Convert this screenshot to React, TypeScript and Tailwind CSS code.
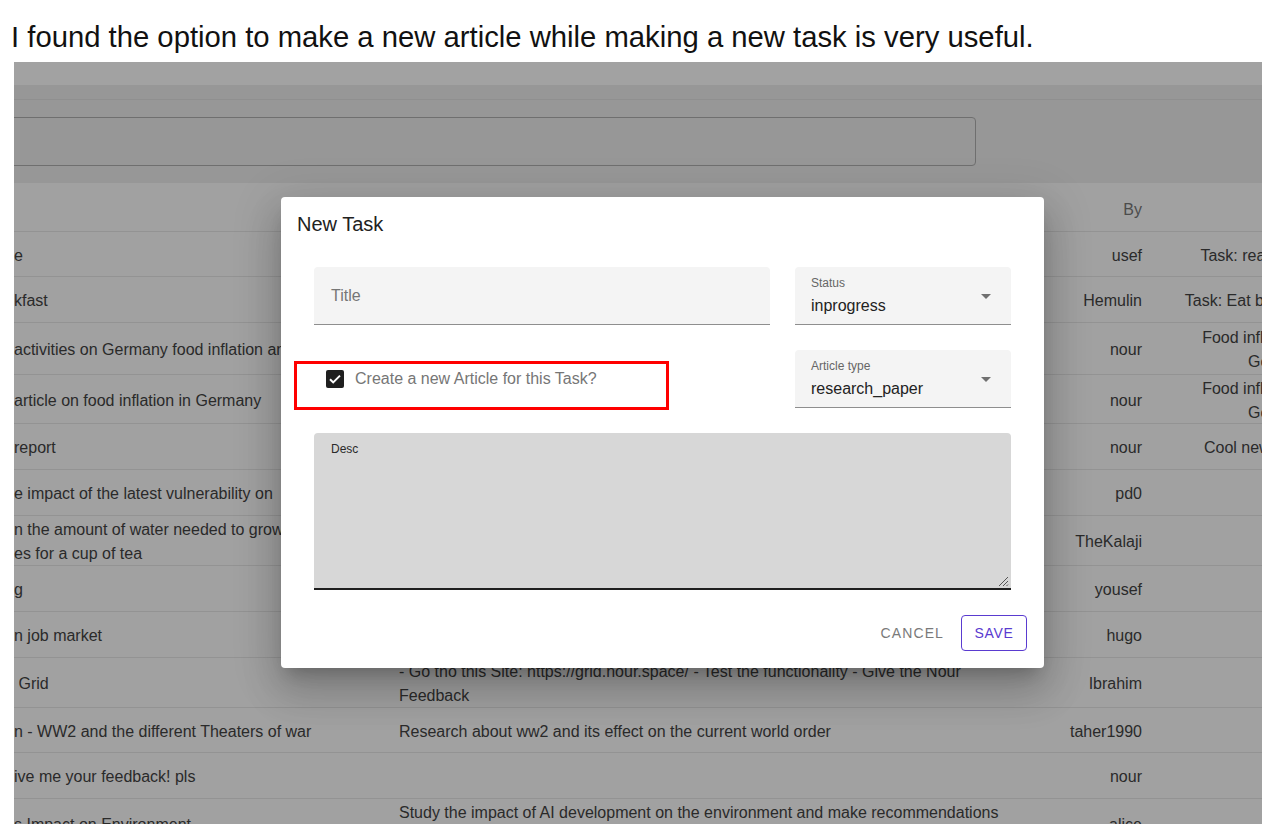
import React from "react";

type Row = { h: number; c1: string[]; c2?: string[]; by: string; c4?: string[] };

const rows: Row[] = [
  { h: 45, c1: ["e"], by: "usef", c4: ["Task: read the newspaper"] },
  { h: 46, c1: ["kfast"], by: "Hemulin", c4: ["Task: Eat breakfast every day!"] },
  { h: 52, c1: ["activities on Germany food inflation and"], by: "nour", c4: ["Food inflation research in", "Germany 22"] },
  { h: 49, c1: ["article on food inflation in Germany"], by: "nour", c4: ["Food inflation research in", "Germany 22"] },
  { h: 46, c1: ["report"], by: "nour", c4: ["Cool new report about AI"] },
  { h: 46, c1: ["e impact of the latest vulnerability on"], by: "pd0" },
  { h: 50, c1: ["n the amount of water needed to grow", "es for a cup of tea"], by: "TheKalaji" },
  { h: 46, c1: ["g"], by: "yousef" },
  { h: 46, c1: ["n job market"], by: "hugo" },
  {
    h: 50,
    c1: [" Grid"],
    c2: ["- Go tho this Site: https://grid.nour.space/ - Test the functionality - Give the Nour", "Feedback"],
    by: "Ibrahim",
  },
  {
    h: 45,
    c1: ["n - WW2 and the different Theaters of war"],
    c2: ["Research about ww2 and its effect on the current world order"],
    by: "taher1990",
  },
  { h: 46, c1: ["ive me your feedback! pls"], by: "nour" },
  {
    h: 50,
    c1: ["s Impact on Environment"],
    c2: ["Study the impact of AI development on the environment and make recommendations", "to reduce its footprint"],
    by: "alice",
  },
];

function Lines({ lines }: { lines?: string[] }) {
  if (!lines) return null;
  return (
    <>
      {lines.map((l, i) => (
        <div key={i} className="leading-[24px] whitespace-pre">
          {l}
        </div>
      ))}
    </>
  );
}

function Arrow() {
  return (
    <svg width="24" height="24" viewBox="0 0 24 24" className="absolute right-[13px] top-[17px]">
      <path d="M7 10l5 5 5-5z" fill="rgba(0,0,0,0.54)" />
    </svg>
  );
}

function SelectField({ label, value }: { label: string; value: string }) {
  return (
    <div className="relative h-[58px] bg-[#f4f4f4] rounded-t-[4px] border-b border-[#8e8e8e] pl-[16px]">
      <div className="pt-[9px] text-[12px] leading-[14px] text-[#666666]">{label}</div>
      <div className="mt-[4px] text-[16px] leading-[24px] text-[#222222]">{value}</div>
      <Arrow />
    </div>
  );
}

export default function App() {
  return (
    <div
      className="relative w-[1262px] h-[824px] overflow-hidden bg-white"
      style={{ fontFamily: "'Liberation Sans', Arial, sans-serif" }}
    >
      {/* caption */}
      <div className="h-[62px] pl-[11px] pt-[20px] text-[29.25px] leading-[34px] text-[#111111] whitespace-nowrap">
        I found the option to make a new article while making a new task is very useful.
      </div>

      {/* dimmed app screenshot */}
      <div className="ml-[14px] flex flex-col overflow-hidden">
        <div className="h-[23px] bg-[#a2a2a2]" />
        <div className="bg-[#979797]">
          <div className="h-[15px] border-b border-[#8f8f8f]" />
          <div className="pt-[17px] pb-[17px]">
            <div className="-ml-[10px] w-[972px] h-[49px] rounded-[4px] border border-[#6f6f6f]" />
          </div>
        </div>
        <div className="bg-[#a1a1a1] text-[16px] text-[#2a2a2a]">
          <div className="flex items-center h-[49px] pt-[6px] border-b border-[#939393]">
            <div className="w-[369px] shrink-0" />
            <div className="w-[657px] shrink-0" />
            <div className="w-[118px] shrink-0 pr-[16px] text-right text-[#4c4c4c]">By</div>
          </div>
          {rows.map((r, i) => (
            <div
              key={i}
              className="flex items-center pt-[3px] border-b border-[#939393]"
              style={{ height: r.h }}
            >
              <div className="w-[369px] shrink-0 overflow-hidden">
                <Lines lines={r.c1} />
              </div>
              <div className="w-[657px] shrink-0 px-[16px] overflow-hidden">
                <Lines lines={r.c2} />
              </div>
              <div className="w-[118px] shrink-0 pr-[16px] text-right leading-[24px]">{r.by}</div>
              <div className="w-[264px] shrink-0 pl-[16px] pr-[12px] text-center">
                <Lines lines={r.c4} />
              </div>
            </div>
          ))}
        </div>
      </div>

      {/* dialog */}
      <div className="absolute left-[281px] top-[197px] w-[763px] h-[471px] bg-white rounded-[4px] shadow-[0_11px_15px_-7px_rgba(0,0,0,0.2),0_24px_38px_3px_rgba(0,0,0,0.14),0_9px_46px_8px_rgba(0,0,0,0.12)] flex flex-col">
        <div className="h-[70px] pl-[16px] pt-[11px] text-[20px] leading-[32px] text-[#212121]">New Task</div>
        <div className="px-[33px] grid grid-cols-[456px_216px] gap-x-[25px] gap-y-[25px]">
          <div className="h-[58px] bg-[#f4f4f4] rounded-t-[4px] border-b border-[#8e8e8e] pl-[17px] flex items-center">
            <span className="text-[16px] leading-[24px] text-[#767676]">Title</span>
          </div>
          <SelectField label="Status" value="inprogress" />
          <div className="h-[58px] pl-[12px] pt-[19px]">
            <div className="flex items-center gap-[11px]">
              <svg width="18" height="18" viewBox="0 0 18 18">
                <rect x="0" y="0" width="18" height="18" rx="2" fill="#1f1f1f" />
                <path d="M4 9.2l3.2 3.2L14 5.6" stroke="#ffffff" strokeWidth="2" fill="none" />
              </svg>
              <span className="text-[16px] leading-[20px] text-[#767676]">Create a new Article for this Task?</span>
            </div>
          </div>
          <SelectField label="Article type" value="research_paper" />
          <div className="col-span-2 relative h-[157px] bg-[#d7d7d7] rounded-t-[4px] border-b-2 border-[#1f1f1f] pl-[17px] pt-[8px]">
            <div className="text-[12px] leading-[16px] text-[#2a2a2a]">Desc</div>
            <svg width="12" height="12" viewBox="0 0 12 12" className="absolute right-[2px] bottom-[1px]">
              <path d="M11 2L2 11M11 6L6 11M11 9.5L9.5 11" stroke="#555555" strokeWidth="1" fill="none" />
            </svg>
          </div>
        </div>
        <div className="mt-[25px] pr-[17px] flex justify-end items-center gap-[9px]">
          <button className="h-[36px] px-[8px] text-[14px] tracking-[0.08em] text-[#7a7a7a]">CANCEL</button>
          <button className="h-[36px] w-[66px] rounded-[4px] border border-[#5a3bd0] text-[14px] tracking-[0.05em] text-[#5a3bd0]">
            SAVE
          </button>
        </div>

        {/* red annotation box */}
        <div className="absolute left-[13px] top-[164px] w-[375px] h-[49px] border-[3px] border-[#ff0000]" />
      </div>
    </div>
  );
}
